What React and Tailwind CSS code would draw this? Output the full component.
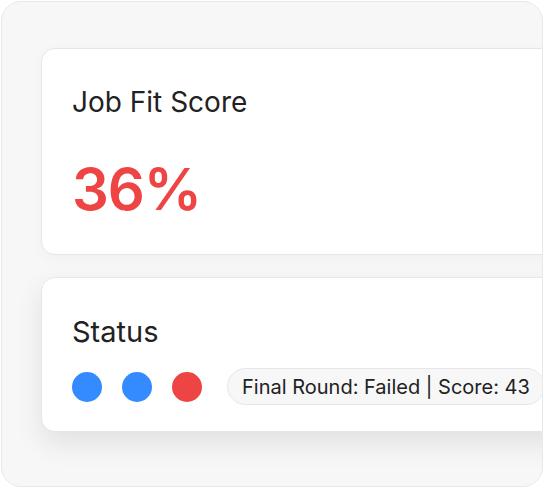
export default function App() {
  const dots = ['bg-[#338bff]', 'bg-[#338bff]', 'bg-[#ef4444]']

  return (
    <div className="w-[544px] h-[488px] bg-white p-px font-['Inter',sans-serif] text-[#222222]">
      <div className="h-[486px] w-[542px] rounded-[20px] border border-[#e8e8ea] bg-[#f7f7f8] overflow-hidden pt-[46px] pl-[39px]">
        <div className="w-[560px] flex flex-col">
          {/* Job fit card */}
          <div className="rounded-[14px] border border-[#e6e6e8] bg-white pt-[37px] pb-[36px] pl-[30px] shadow-[0_4px_14px_rgba(0,0,0,0.03)]">
            <h2 className="text-[28px] leading-[32px] font-normal">Job Fit Score</h2>
            <div className="mt-[42px] text-[58px] leading-none font-semibold text-[#ef4444] tracking-[-0.02em]">36%</div>
          </div>

          {/* Status card */}
          <div className="mt-[22px] rounded-[14px] border border-[#e6e6e8] bg-white pt-[38px] pb-[26px] pl-[30px] shadow-[0_12px_28px_rgba(0,0,0,0.09)]">
            <h2 className="text-[29px] leading-[32px] font-normal">Status</h2>
            <div className="mt-5 flex items-center">
              <div className="flex items-center gap-5">
                {dots.map((c, i) => (
                  <span key={i} className={`block w-[30px] h-[30px] rounded-full ${c}`} />
                ))}
              </div>
              <div className="ml-[25px] h-[37px] flex items-center rounded-full border border-[#e6e6e8] bg-[#f7f7f8] px-[14px] text-[20px] whitespace-nowrap">
                Final Round: Failed | Score: 43
              </div>
            </div>
          </div>
        </div>
      </div>
    </div>
  )
}
